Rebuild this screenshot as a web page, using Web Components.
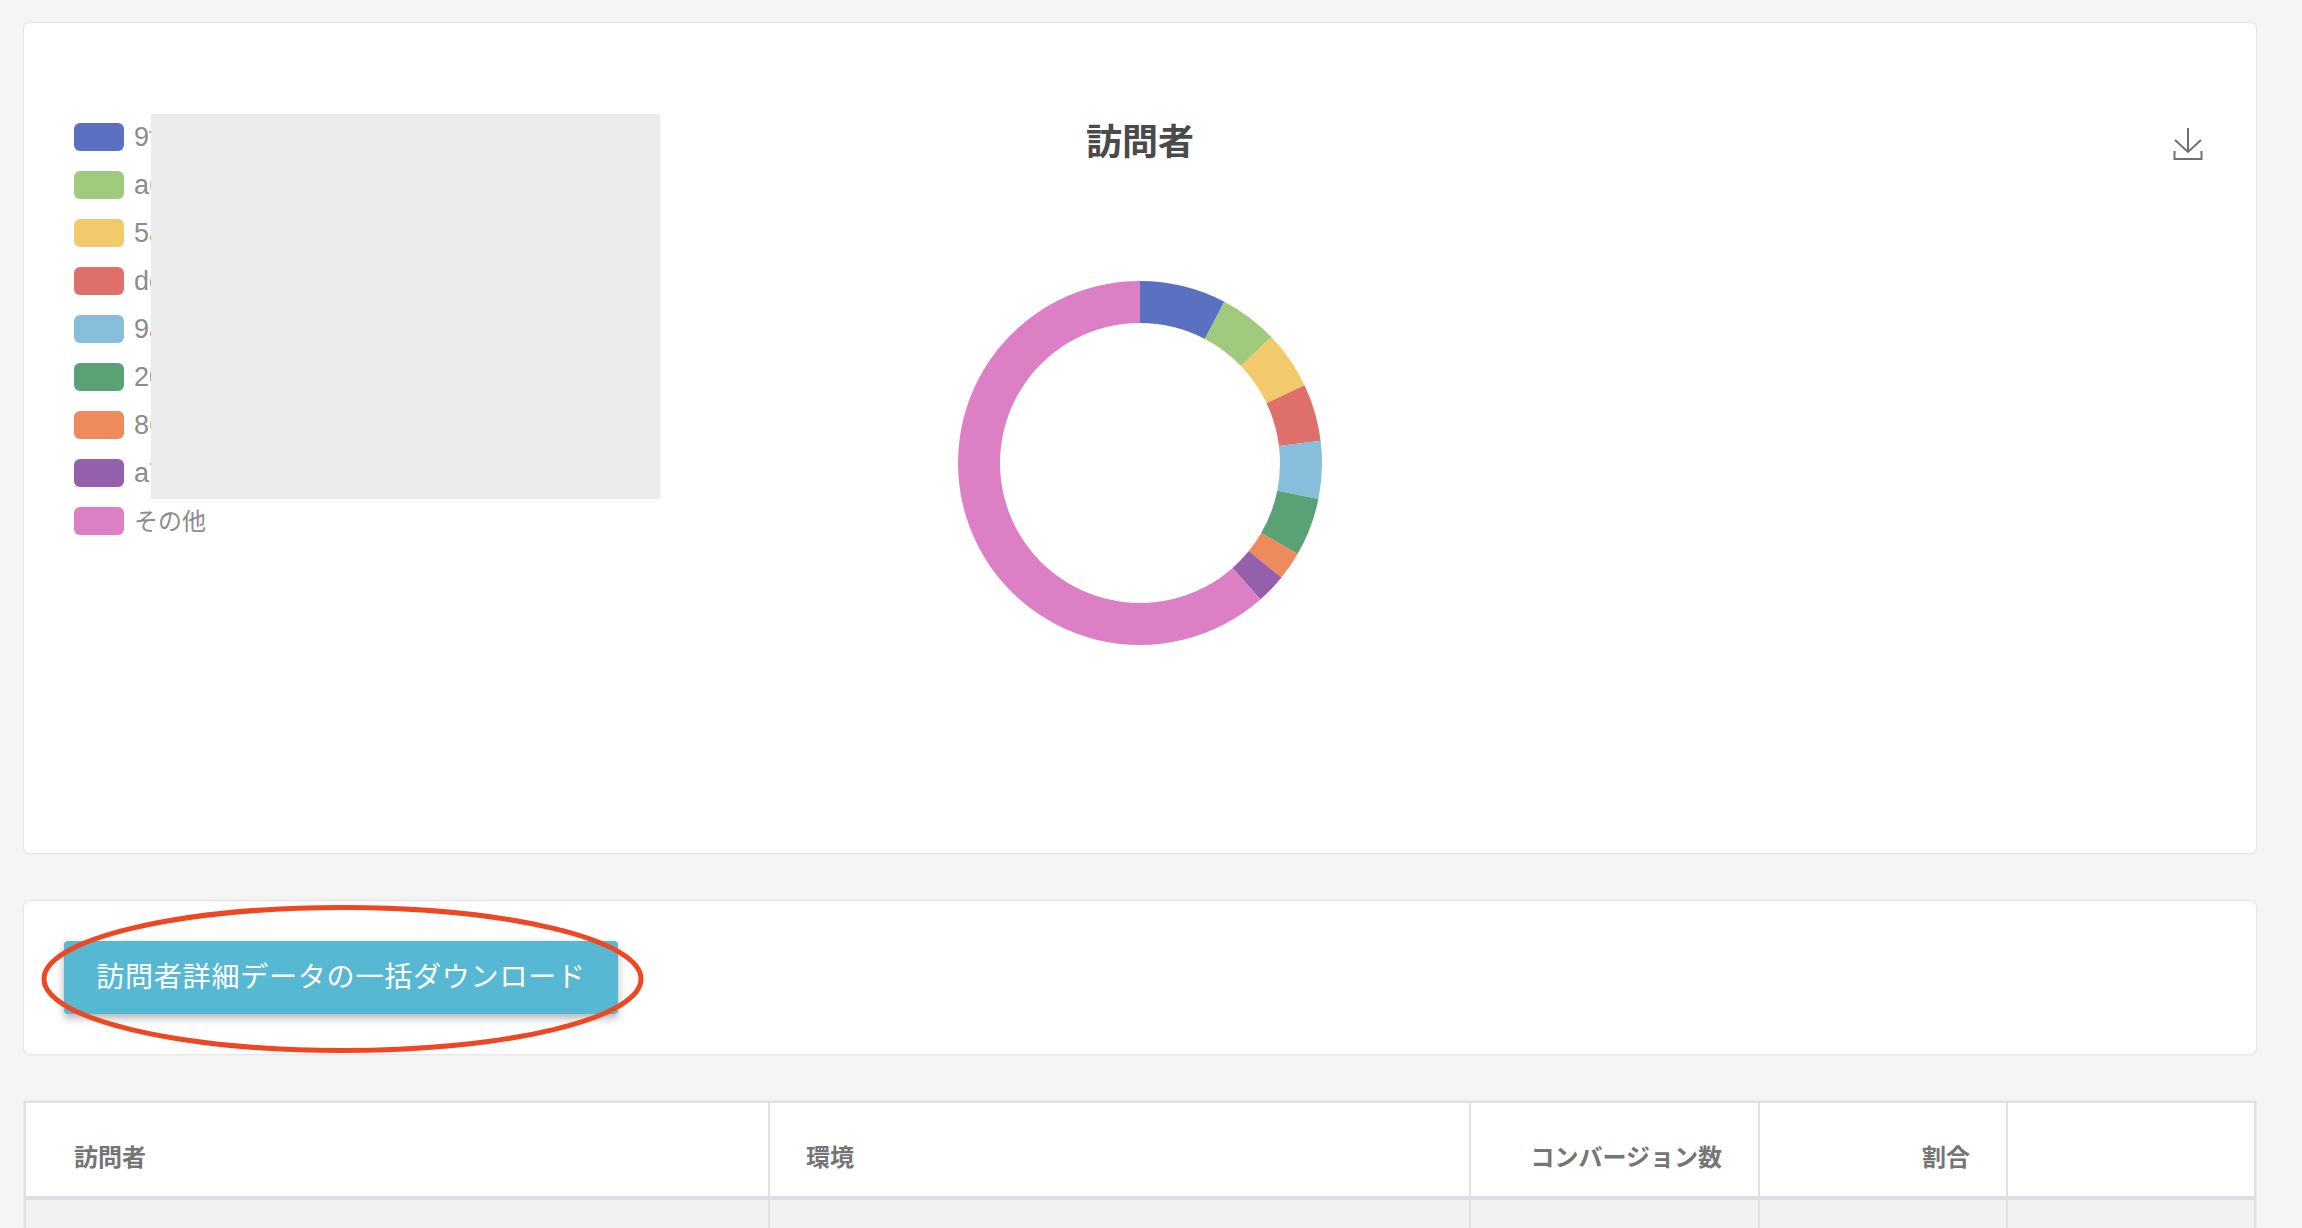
<!DOCTYPE html>
<html lang="ja"><head><meta charset="utf-8"><title>訪問者</title>
<style>
html,body{margin:0;height:100%;overflow:hidden;background:#f5f5f5}
body{padding:23px 46px 0 24px;box-sizing:border-box;display:flex;flex-direction:column;gap:48px;font-family:"Liberation Sans","Noto Sans CJK JP",sans-serif}
visitor-table{margin-top:-1px}
</style></head><body>
<chart-card>
  <chart-legend slot="legend"></chart-legend>
  <span slot="title">訪問者</span>
  <donut-chart slot="chart"></donut-chart>
  <save-icon slot="tool"></save-icon>
</chart-card>
<action-card><ellipse-button>訪問者詳細データの一括ダウンロード</ellipse-button></action-card>
<visitor-table></visitor-table>
<script>
function def(name, html){
  customElements.define(name, class extends HTMLElement{
    constructor(){super();this.attachShadow({mode:'open'}).innerHTML=html;}
  });
}
const COLORS=['#5a70c0','#a0cb7f','#f3ca6b','#df6f6b','#87bedb','#5aa175','#ee8a5b','#9560ab','#dd7fc5'];
const LABELS=['9f','a6','5a','de','9a','20','86','a7','その他'];
def('chart-card',`<style>
:host{display:block;flex:none;height:830px;box-sizing:border-box;background:#fff;border-radius:6px;box-shadow:0 0 3px rgba(0,0,0,.16);position:relative;font-family:"Liberation Sans","Noto Sans CJK JP",sans-serif}
.grid{display:grid;grid-template-columns:1fr auto 1fr;padding:100px 50px 0;height:100%;box-sizing:border-box}
.title{font:700 36px/36px "Noto Sans CJK JP",sans-serif;color:#4a4a4a;text-align:center;height:158px;margin-top:-2px;padding-bottom:2px}
.tool{justify-self:end;padding:5px 3px 0 0}
.mask{position:absolute;left:127px;top:91px;width:509px;height:385px;background:#ebebeb}
</style><div class="grid"><div><slot name="legend"></slot></div><div><div class="title"><slot name="title"></slot></div><slot name="chart"></slot></div><div class="tool"><slot name="tool"></slot></div></div><div class="mask"></div>`);
def('chart-legend',`<style>
:host{display:flex;flex-direction:column;gap:20px}
.i{display:flex;align-items:center;gap:10px;height:28px;font:27px/28px "Liberation Sans",sans-serif;color:#8c8c8c}
.j{font:24px/28px "Noto Sans CJK JP",sans-serif;padding-bottom:3px}
.s{width:50px;height:28px;border-radius:6px}
</style>`+LABELS.map((l,i)=>`<div class="i"><span class="s" style="background:${COLORS[i]}"></span><span class="${i==8?'j':''}">${l}</span></div>`).join(''));
function arc(a0,a1,R,r,cx,cy){
  const p=(a,q)=>{const t=a*Math.PI/180;return (cx+q*Math.sin(t)).toFixed(2)+' '+(cy-q*Math.cos(t)).toFixed(2)};
  const large=a1-a0>180?1:0;
  return `M${p(a0,R)}A${R} ${R} 0 ${large} 1 ${p(a1,R)}L${p(a1,r)}A${r} ${r} 0 ${large} 0 ${p(a0,r)}Z`;
}
const ANG=[0,27.6,46.2,64.7,83,101.4,120,129,138.6,360];
def('donut-chart',`<style>:host{display:block;width:364px;height:364px}svg{display:block}</style><svg width="364" height="364" viewBox="0 0 364 364">`+
  COLORS.map((c,i)=>`<path fill="${c}" d="${arc(ANG[i],ANG[i+1],182,140,182,182)}"/>`).join('')+`</svg>`);
def('save-icon',`<style>:host{display:block;width:30px;height:33px}svg{display:block}</style><svg width="30" height="33" viewBox="0 0 30 33" fill="none" stroke="#6e7079" stroke-width="2"><path d="M15 0V24M2 12L15 24L28 12M1.5 23V31H28.5V23"/></svg>`);
def('action-card',`<style>:host{display:block;flex:none;height:153px;box-sizing:border-box;padding:40px;background:#fff;border-radius:6px;box-shadow:0 0 3px rgba(0,0,0,.16)}</style><slot></slot>`);
def('ellipse-button',`<style>
:host{display:inline-block;position:relative}
.b{width:554px;height:73px;box-sizing:border-box;padding-bottom:4px;background:#57b8d3;border-radius:4px;box-shadow:0 4px 8px rgba(0,0,0,.3);color:#fff;font:28px/69px "Noto Sans CJK JP",sans-serif;letter-spacing:.8px;text-align:center;white-space:nowrap}
svg{position:absolute;left:-22px;top:-36px;overflow:visible;pointer-events:none}
</style><div class="b"><slot></slot></div><svg width="601" height="148" viewBox="0 0 601 148"><ellipse cx="300.5" cy="74" rx="298.5" ry="71.5" fill="none" stroke="#ee4723" stroke-width="5"/></svg>`);
def('visitor-table',`<style>
:host{display:block;flex:1 0 auto;box-sizing:border-box;border:2px solid #e0e0e5;border-bottom:0;background:#f1f1f1;font:700 24px/1 "Noto Sans CJK JP",sans-serif;color:#757575;box-shadow:0 0 2px rgba(0,0,0,.08)}
.g{display:grid;grid-template-columns:744px 701px 289px 248px 1fr;grid-template-rows:auto 1fr;height:100%}
.h{background:#fff;border-bottom:4px solid #dee0e4;border-right:2px solid #e2e2e5;padding:13px 36px 0;box-sizing:border-box;height:97px;display:flex;align-items:center}
.h:nth-child(5),.r:nth-child(10){border-right:0}
.r{background:#f1f1f1;border-right:2px solid #e2e2e5}
.first{padding-left:48px}
.end{justify-content:flex-end}
</style><div class="g">
<div class="h first">訪問者</div><div class="h">環境</div><div class="h end">コンバージョン数</div><div class="h end">割合</div><div class="h"></div>
<div class="r"></div><div class="r"></div><div class="r"></div><div class="r"></div><div class="r"></div>
</div>`);
</script>
</body></html>
